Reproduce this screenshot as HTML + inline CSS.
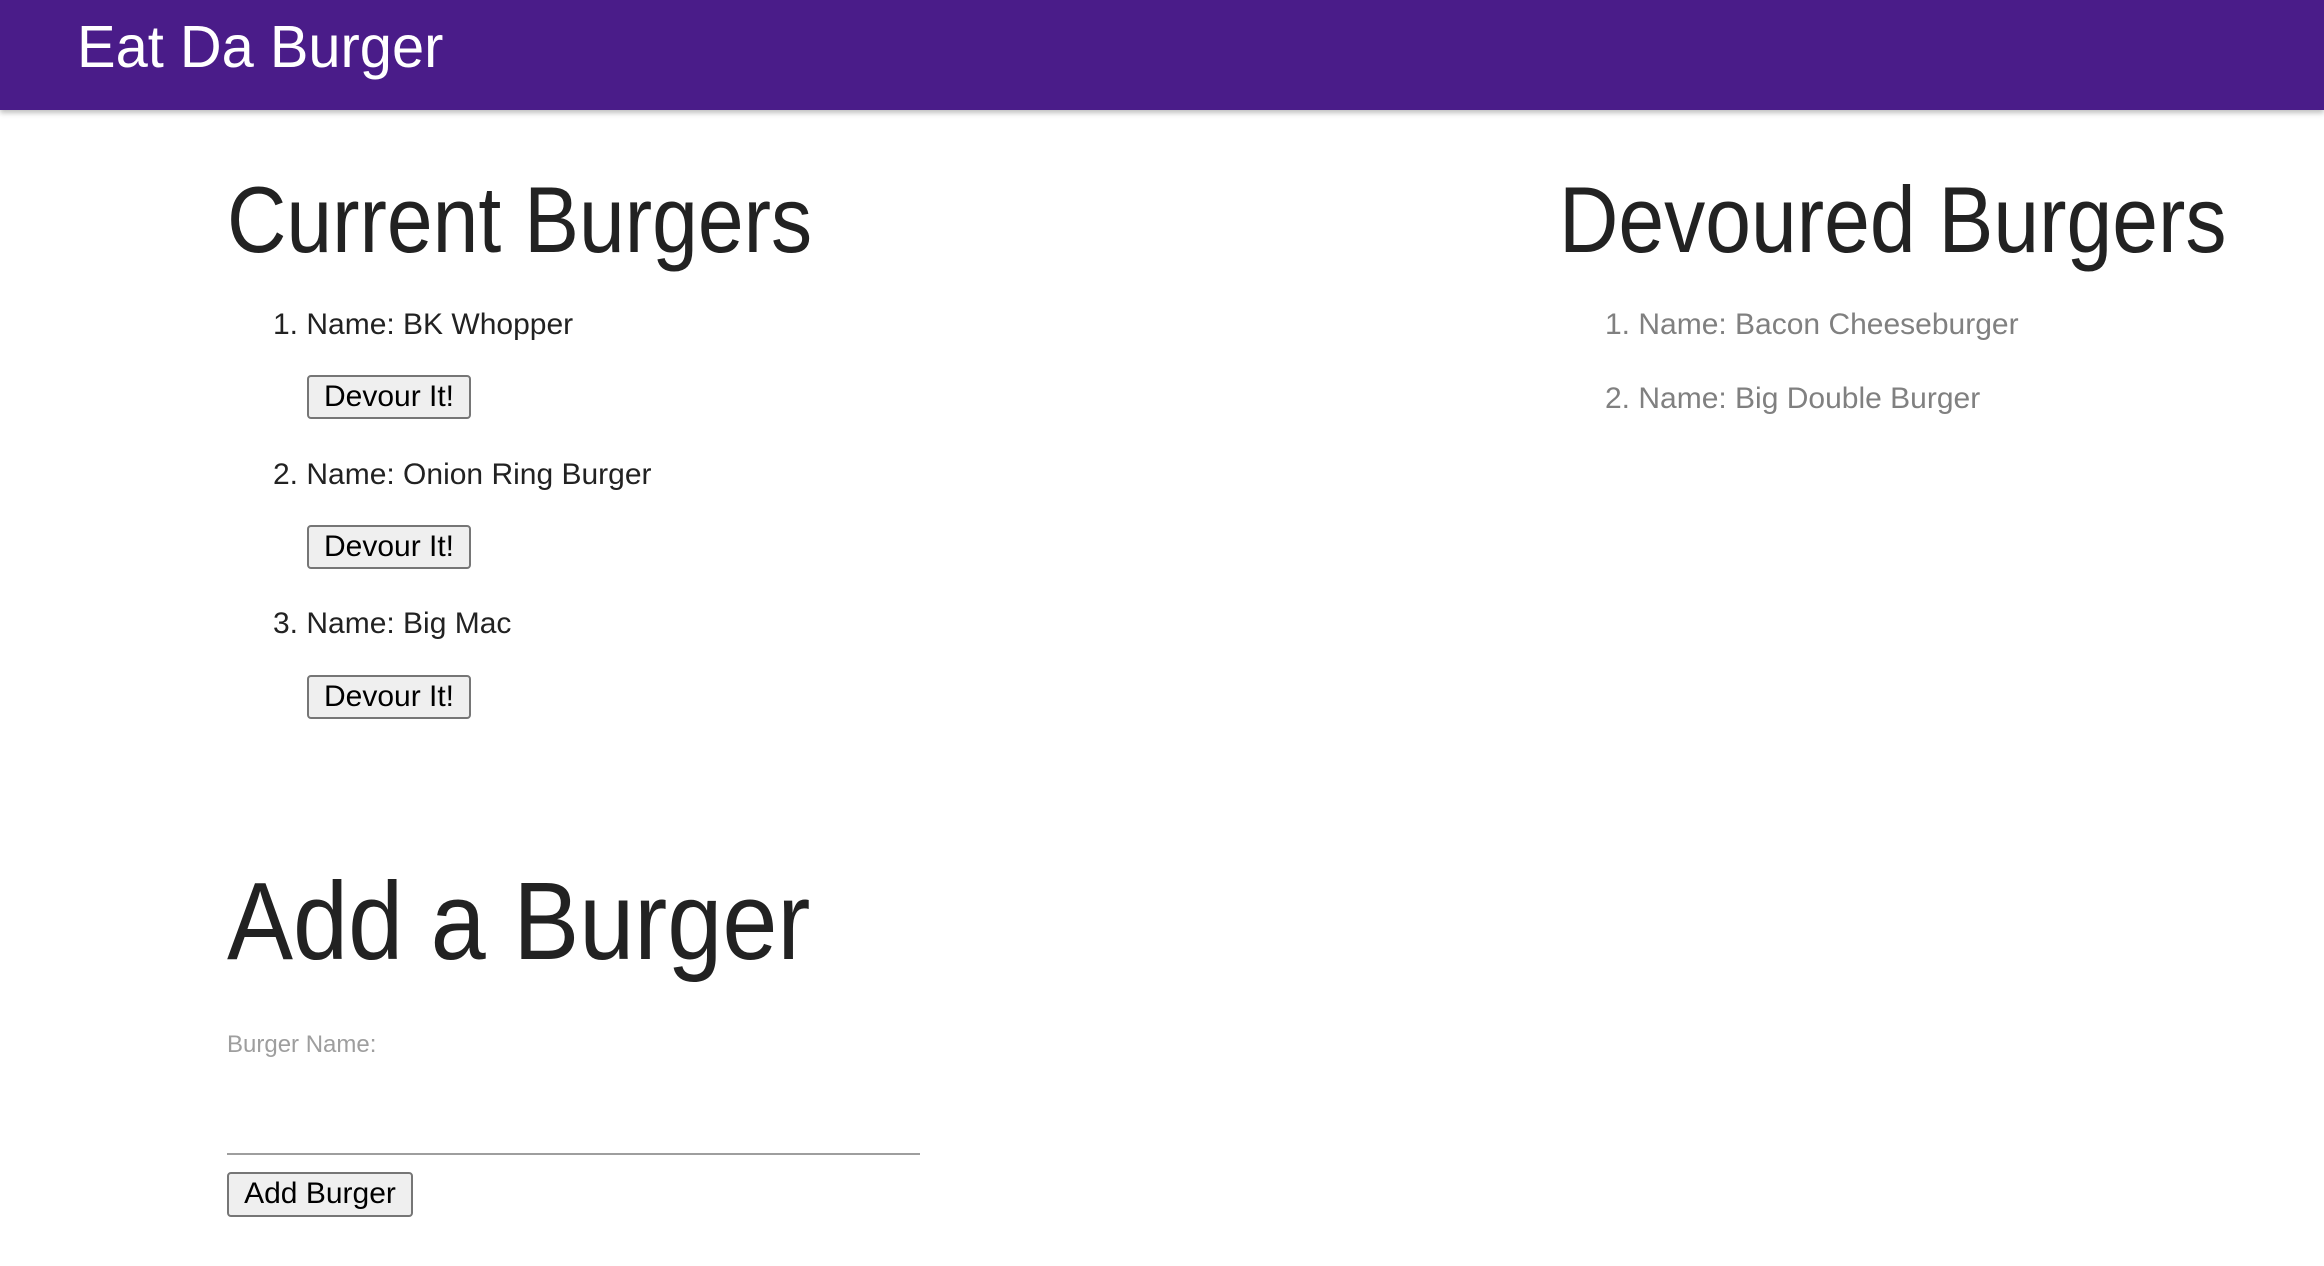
<!DOCTYPE html>
<html><head><meta charset="utf-8"><style>
*{margin:0;padding:0;box-sizing:border-box}
body{width:2324px;height:1266px;background:#fff;font-family:"Liberation Sans",Arial,sans-serif;position:relative;overflow:hidden;color:#222}
.nav{position:absolute;left:0;top:0;width:2324px;height:110px;background:#4a1c89;box-shadow:0 3px 5px rgba(0,0,0,.25)}
.t{position:absolute;white-space:nowrap;transform-origin:0 0}
.btn{position:absolute;background:#efefef;border:2px solid #767676;border-radius:4px;font-size:30px;color:#000;text-align:center;line-height:40px;font-family:"Liberation Sans",Arial,sans-serif}
</style></head><body>
<div class="nav"></div>
<div class="t" style="left:77px;top:18px;font-size:59px;line-height:59px;color:#fff;transform:scaleX(.98)">Eat Da Burger</div>

<div class="t" style="left:227px;top:173px;font-size:94px;line-height:94px;transform:scaleX(.875)">Current Burgers</div>
<div class="t" style="left:1559px;top:173px;font-size:94px;line-height:94px;transform:scaleX(.875)">Devoured Burgers</div>

<div class="t" style="left:273px;top:310px;font-size:30px;line-height:30px">1. Name: BK Whopper</div>
<div class="btn" style="left:307px;top:375px;width:164px;height:44px">Devour It!</div>
<div class="t" style="left:273px;top:460px;font-size:30px;line-height:30px">2. Name: Onion Ring Burger</div>
<div class="btn" style="left:307px;top:525px;width:164px;height:44px">Devour It!</div>
<div class="t" style="left:273px;top:609px;font-size:30px;line-height:30px">3. Name: Big Mac</div>
<div class="btn" style="left:307px;top:675px;width:164px;height:44px">Devour It!</div>

<div class="t" style="left:1605px;top:310px;font-size:30px;line-height:30px;color:#808080">1. Name: Bacon Cheeseburger</div>
<div class="t" style="left:1605px;top:384px;font-size:30px;line-height:30px;color:#808080">2. Name: Big Double Burger</div>

<div class="t" style="left:227px;top:867px;font-size:110px;line-height:110px;transform:scaleX(.9)">Add a Burger</div>
<div class="t" style="left:227px;top:1033px;font-size:24px;line-height:24px;color:#9e9e9e">Burger Name:</div>
<div style="position:absolute;left:227px;top:1153px;width:693px;height:2px;background:#9e9e9e"></div>
<div class="btn" style="left:227px;top:1172px;width:186px;height:45px">Add Burger</div>
</body></html>
